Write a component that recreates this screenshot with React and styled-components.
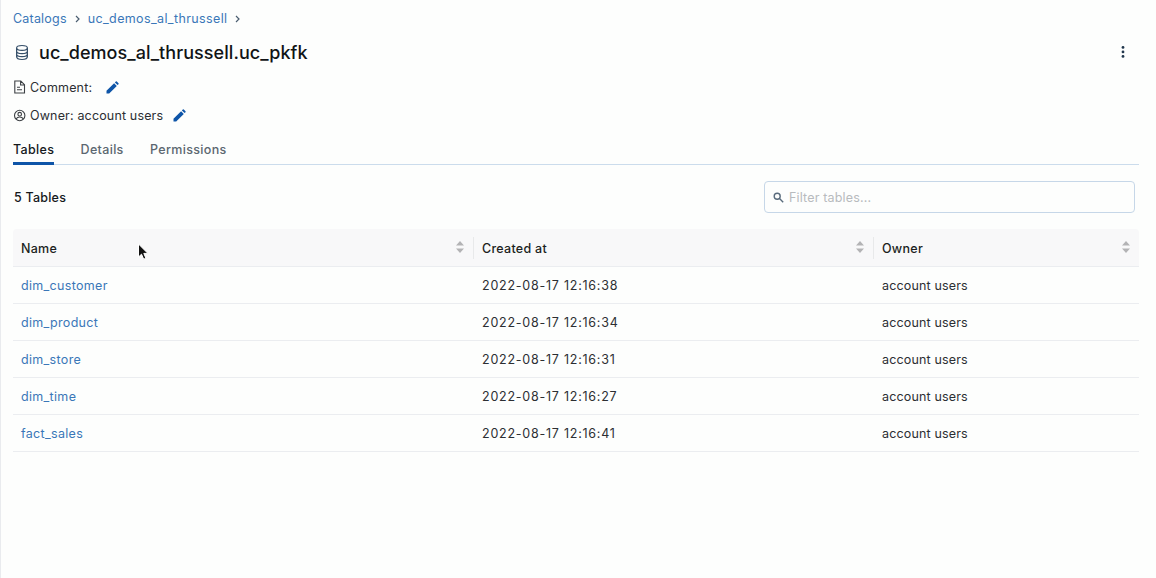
import React from "react";
import styled, { createGlobalStyle } from "styled-components";

const GlobalStyle = createGlobalStyle`
  * { box-sizing: border-box; }
  body {
    margin: 0;
    background: #fdfefd;
    color: #2c2f33;
    font-family: Inter, "Liberation Sans", sans-serif;
    font-size: 12.5px;
    line-height: 20px;
    letter-spacing: 0.16px;
  }
`;

const Page = styled.main`
  height: 578px;
  padding: 9px 17px 0 12px;
  border-left: 1px solid #e9ebee;
`;

const Breadcrumbs = styled.nav`
  display: flex;
  align-items: center;
  height: 20px;
`;

const Link = styled.a`
  color: #3a77b8;
  text-decoration: none;
  white-space: nowrap;
  letter-spacing: ${(p) => p.$spacing || "0.32px"};
`;

const Separator = styled.svg`
  width: 5px;
  height: 8px;
  margin: 0 8px;
  flex: none;
`;

const TitleBar = styled.header`
  display: flex;
  align-items: center;
  height: 28px;
  margin-top: 9px;
`;

const Title = styled.h1`
  flex: 1;
  margin: 0 0 0 9px;
  padding-top: 1px;
  color: #111416;
  font-size: 18px;
  font-weight: 500;
  line-height: 28px;
  letter-spacing: 0.06px;
`;

const Icon = styled.svg`
  display: block;
  flex: none;
  width: ${(p) => p.$w}px;
  height: ${(p) => p.$h || p.$w}px;
`;

const MenuButton = styled.button`
  display: flex;
  justify-content: center;
  width: 32px;
  padding: 0;
  border: 0;
  background: none;
`;

const MetaRow = styled.div`
  display: flex;
  align-items: center;
  height: 20px;
  margin-top: ${(p) => p.$top}px;
`;

const MetaText = styled.span`
  margin: 0 ${(p) => p.$gap}px 0 4px;
  padding-top: 2px;
`;

const Tabs = styled.div`
  display: flex;
  gap: 26.4px;
  height: 28px;
  margin-top: 12px;
  border-bottom: 1px solid #cbdcec;
`;

const Tab = styled.div`
  height: 28px;
  padding-top: 3px;
  color: ${(p) => (p.$active ? "#15191c" : "#5b6770")};
  border-bottom: ${(p) => (p.$active ? "3px solid #0e55a8" : "0")};
  font-weight: 500;
  letter-spacing: 0.32px;
`;

const Toolbar = styled.div`
  display: flex;
  align-items: center;
  justify-content: space-between;
  height: 32px;
  margin: 16px 4px 16px 0;
`;

const Count = styled.div`
  padding: 2px 0 0 1px;
  color: #15191c;
  font-weight: 500;
  letter-spacing: 0.22px;
`;

const Search = styled.label`
  display: flex;
  align-items: center;
  gap: 5px;
  width: 371px;
  height: 32px;
  padding: 0 8px;
  border: 1px solid #c6d7e8;
  border-radius: 4px;
`;

const SearchInput = styled.input`
  flex: 1;
  padding: 2px 0 0;
  border: 0;
  outline: 0;
  background: none;
  font: inherit;
  letter-spacing: inherit;
  &::placeholder { color: #b8bbbe; opacity: 1; }
`;

const Row = styled.div`
  display: grid;
  grid-template-columns: 461px 400px 1fr;
  align-items: center;
  height: 37px;
  border-bottom: 1px solid #ebedf0;
`;

const HeadRow = styled(Row)`
  height: 38px;
  background: #f8f8f9;
  border-radius: 4px 4px 0 0;
  color: #1c1f22;
  font-weight: 500;
  letter-spacing: 0.28px;
`;

const Cell = styled.div`
  padding: 1px 0 0 8px;
  white-space: nowrap;
  letter-spacing: ${(p) => p.$spacing || "inherit"};
`;

const HeadCell = styled.div`
  display: flex;
  align-items: center;
  justify-content: space-between;
  height: 22px;
  padding: 0 9px 0 8px;
  border-right: ${(p) => (p.$last ? "0" : "1px solid #e8e9ea")};
`;

const HeadLabel = styled.span`
  padding-top: 2px;
`;

const SortGlyph = styled(Icon)`
  margin-bottom: 2px;
`;

const Pointer = styled.svg`
  position: absolute;
  left: 136px;
  top: 242px;
  width: 14px;
  height: 20px;
`;

const Chevron = () => (
  <Separator viewBox="0 0 5 8" fill="none" stroke="#4b5e70" strokeWidth="1.2">
    <path d="M1 1l3 3-3 3" />
  </Separator>
);

const Pencil = () => (
  <Icon $w={13} viewBox="0 0 13 13" fill="#0e55a8">
    <path d="M.5 12.5v-2.7L8.1 2.2l2.7 2.7-7.6 7.6zM8.9 1.4l.9-.9q.5-.4 1 0l1.7 1.7q.4.5 0 1l-.9.9z" />
  </Icon>
);

const SortIcon = () => (
  <SortGlyph $w={8} $h={12} viewBox="0 0 8 12" fill="#b3b3b5">
    <path d="M4 0l4 4.5H0zM0 7.5h8L4 12z" />
  </SortGlyph>
);

const TABLES = [
  ["dim_customer", "2022-08-17 12:16:38"],
  ["dim_product", "2022-08-17 12:16:34"],
  ["dim_store", "2022-08-17 12:16:31"],
  ["dim_time", "2022-08-17 12:16:27"],
  ["fact_sales", "2022-08-17 12:16:41"],
];

export default function App() {
  return (
    <Page>
      <GlobalStyle />
      <Breadcrumbs>
        <Link $spacing="0.2px">Catalogs</Link>
        <Chevron />
        <Link $spacing="0.38px">uc_demos_al_thrussell</Link>
        <Chevron />
      </Breadcrumbs>
      <TitleBar>
        <Icon $w={17} viewBox="0 0 17 17" fill="none" stroke="#36506a" strokeWidth="1.2">
          <ellipse cx="9" cy="3.9" rx="5.4" ry="2.4" />
          <path d="M3.6 4v8.6c0 1.6 2.4 2.9 5.4 2.9s5.4-1.3 5.4-2.9V4M3.6 7c0 1.5 2.4 2.6 5.4 2.6s5.4-1.1 5.4-2.6M3.6 10c0 1.5 2.4 2.6 5.4 2.6s5.4-1.1 5.4-2.6" />
        </Icon>
        <Title>uc_demos_al_thrussell.uc_pkfk</Title>
        <MenuButton aria-label="More">
          <Icon $w={4} $h={14} viewBox="0 0 4 14" fill="#20364c">
            <circle cx="2" cy="2.4" r="1.4" />
            <circle cx="2" cy="6.9" r="1.4" />
            <circle cx="2" cy="11.4" r="1.4" />
          </Icon>
        </MenuButton>
      </TitleBar>
      <MetaRow $top={11}>
        <Icon $w={13} $h={14} viewBox="0 0 13 14" fill="none" stroke="#3c4044" strokeWidth="1.1">
          <path d="M1.8 1h6l3.7 3.7V13H1.8zM7.6 1v4h3.9M4 7.3h3M4 9.8h5" />
        </Icon>
        <MetaText $gap={14}>Comment:</MetaText>
        <Pencil />
      </MetaRow>
      <MetaRow $top={8}>
        <Icon $w={13} viewBox="0 0 13 13" fill="none" stroke="#3c4044" strokeWidth="1.1">
          <circle cx="6.7" cy="6.5" r="5.2" />
          <circle cx="6.7" cy="5.2" r="1.8" />
          <path d="M3 10c1-1.5 2.2-2 3.7-2s2.7.5 3.7 2" />
        </Icon>
        <MetaText $gap={10}>Owner: account users</MetaText>
        <Pencil />
      </MetaRow>
      <Tabs>
        <Tab $active>Tables</Tab>
        <Tab>Details</Tab>
        <Tab>Permissions</Tab>
      </Tabs>
      <Toolbar>
        <Count>5 Tables</Count>
        <Search>
          <Icon $w={11} viewBox="0 0 11 11" fill="none" stroke="#596b7c" strokeWidth="1.4">
            <circle cx="4.2" cy="4.2" r="3" />
            <path d="M6.5 6.5l3.7 3.7" />
          </Icon>
          <SearchInput placeholder="Filter tables..." />
        </Search>
      </Toolbar>
      <HeadRow>
        <HeadCell><HeadLabel>Name</HeadLabel><SortIcon /></HeadCell>
        <HeadCell><HeadLabel>Created at</HeadLabel><SortIcon /></HeadCell>
        <HeadCell $last><HeadLabel>Owner</HeadLabel><SortIcon /></HeadCell>
      </HeadRow>
      {TABLES.map(([name, created]) => (
        <Row key={name}>
          <Cell><Link>{name}</Link></Cell>
          <Cell $spacing="0.76px">{created}</Cell>
          <Cell>account users</Cell>
        </Row>
      ))}
      <Pointer viewBox="0 0 14 20">
        <path d="M2.5 2v13l3-2.8 2.2 5 2.2-1-2.1-4.8h4.1z" fill="#111" stroke="#fff" strokeWidth="1" />
      </Pointer>
    </Page>
  );
}
